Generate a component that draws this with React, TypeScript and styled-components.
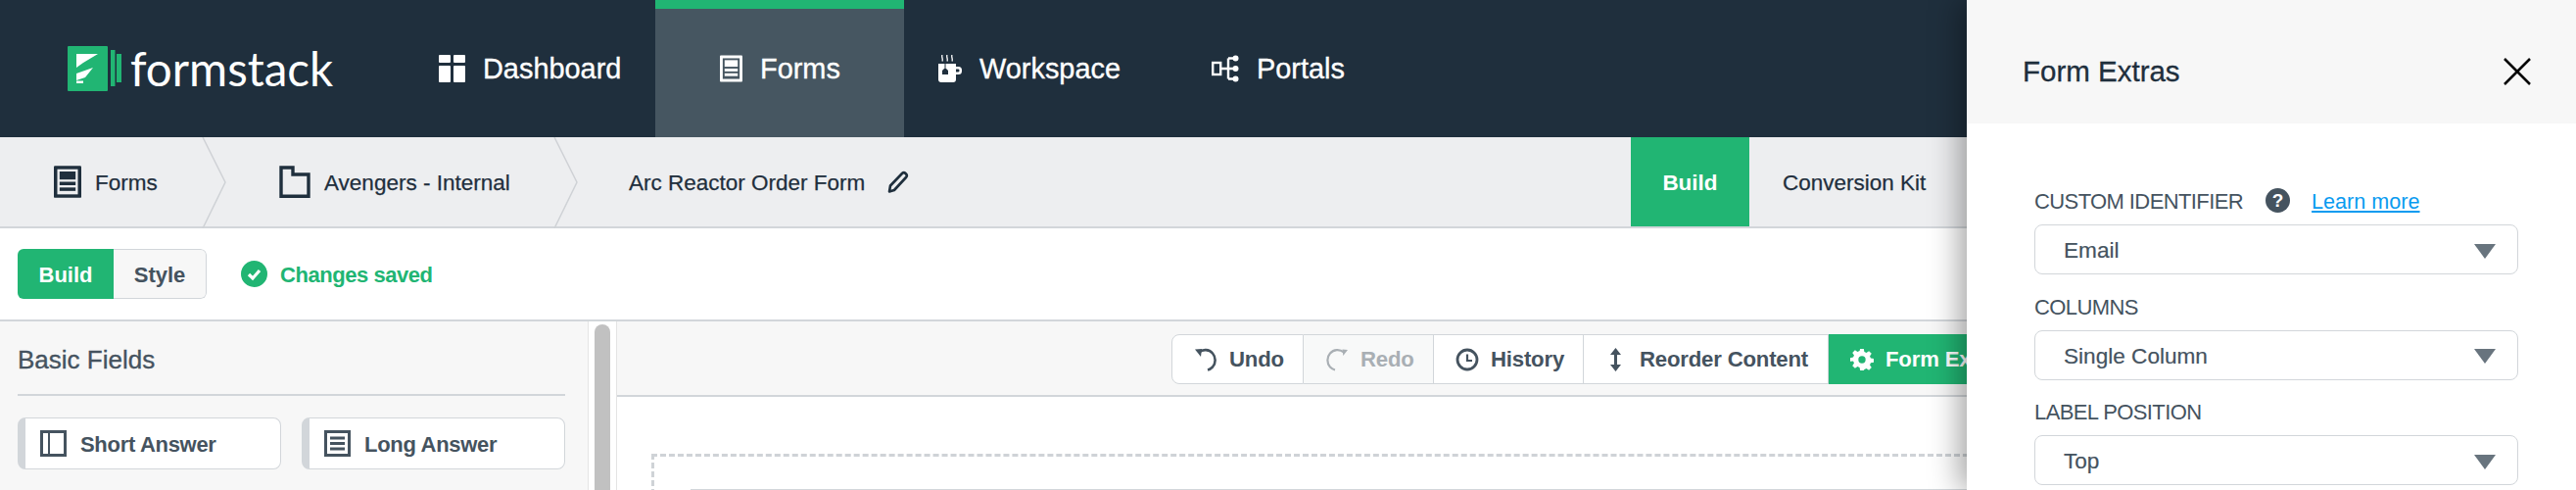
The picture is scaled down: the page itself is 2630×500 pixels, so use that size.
import React from 'react';
import styled, { createGlobalStyle } from 'styled-components';

const GlobalStyle = createGlobalStyle`
  html, body {
    margin: 0;
    padding: 0;
    background: #fff;
  }
  * {
    box-sizing: border-box;
  }
  body {
    font-family: "Liberation Sans", Arial, sans-serif;
  }
`;

const green = '#21b573';
const navy = '#1f2f3d';
const slate = '#45535f';
const line = '#d2d6da';

const Page = styled.div`
  position: relative;
  width: 2630px;
  height: 500px;
  overflow: hidden;
`;

const TopNav = styled.div`
  display: flex;
  height: 140px;
  background: ${navy};
  color: #fff;
`;

const Logo = styled.div`
  display: flex;
  align-items: center;
  width: 448px;
  padding-left: 69px;
  svg {
    flex: none;
  }
`;

const LogoWord = styled.span`
  font-family: Lato, sans-serif;
  font-size: 47.5px;
  font-weight: 400;
  margin-left: 9px;
  margin-top: -2px;
`;

const NavItem = styled.div<{ $active?: boolean; $width: number; $pad: number }>`
  display: flex;
  align-items: center;
  gap: 18px;
  width: ${(p) => p.$width}px;
  padding-left: ${(p) => p.$pad}px;
  padding-bottom: ${(p) => (p.$active ? 9 : 0)}px;
  font-size: 28.9px;
  -webkit-text-stroke: 0.35px #fff;
  background: ${(p) => (p.$active ? '#465661' : 'transparent')};
  border-top: ${(p) => (p.$active ? `9px solid ${green}` : '0')};
`;

const Crumbs = styled.div`
  display: flex;
  height: 93px;
  background: #edeef0;
  border-bottom: 2px solid ${line};
  color: ${navy};
  font-size: 22.5px;
  -webkit-text-stroke: 0.25px ${navy};
`;

const Crumb = styled.div<{ $width: number; $pad: number; $gap?: number }>`
  position: relative;
  display: flex;
  align-items: center;
  gap: ${(p) => p.$gap ?? 14}px;
  width: ${(p) => p.$width}px;
  padding-left: ${(p) => p.$pad}px;
`;

const CrumbText = styled.span`
  padding-top: 2px;
`;

const Chevron = styled.svg`
  position: absolute;
  top: 0;
  right: -26px;
`;

const Tab = styled.div<{ $on?: boolean }>`
  display: flex;
  align-items: center;
  justify-content: center;
  height: 91px;
  padding: 2px ${(p) => (p.$on ? 0 : 34)}px 0;
  width: ${(p) => (p.$on ? '121px' : 'auto')};
  background: ${(p) => (p.$on ? green : 'transparent')};
  color: ${(p) => (p.$on ? '#fff' : navy)};
  font-weight: ${(p) => (p.$on ? 700 : 400)};
  font-size: 22.5px;
  -webkit-text-stroke: ${(p) => (p.$on ? '0' : '0.25px')};
`;

const SaveBar = styled.div`
  display: flex;
  align-items: center;
  height: 95px;
  padding-left: 18px;
  border-bottom: 2px solid ${line};
`;

const Toggle = styled.div`
  display: flex;
  width: 193px;
  height: 51px;
  border-radius: 6px;
  overflow: hidden;
  font-size: 22px;
  font-weight: 700;
`;

const ToggleSide = styled.div<{ $on?: boolean }>`
  display: flex;
  align-items: center;
  justify-content: center;
  width: ${(p) => (p.$on ? 98 : 95)}px;
  padding-top: 2px;
  background: ${(p) => (p.$on ? green : '#f7f7f7')};
  color: ${(p) => (p.$on ? '#fff' : slate)};
  border: ${(p) => (p.$on ? '0' : `1px solid ${line}`)};
  border-left: 0;
  border-radius: ${(p) => (p.$on ? '0' : '0 6px 6px 0')};
`;

const Saved = styled.div`
  display: flex;
  align-items: center;
  gap: 13px;
  margin-left: 35px;
  color: ${green};
  font-size: 22px;
  font-weight: 700;
  letter-spacing: -0.45px;
`;

const SavedText = styled.span`
  padding-top: 2px;
`;

const Workspace = styled.div`
  display: flex;
  height: 172px;
`;

const Sidebar = styled.div`
  width: 601px;
  padding: 0 23px 0 18px;
  background: #f7f7f7;
  border-right: 1px solid #e4e4e4;
`;

const SideTitle = styled.div`
  height: 76px;
  padding-top: 24px;
  font-size: 26px;
  line-height: 30px;
  color: ${slate};
  -webkit-text-stroke: 0.35px ${slate};
  border-bottom: 2px solid ${line};
`;

const FieldRow = styled.div`
  display: flex;
  justify-content: space-between;
  margin-top: 22px;
`;

const FieldButton = styled.div`
  display: flex;
  align-items: center;
  gap: 14px;
  width: 269px;
  height: 53px;
  padding-left: 15px;
  background: #fff;
  border: 1px solid ${line};
  border-left: 8px solid ${line};
  border-radius: 8px;
  color: ${slate};
  font-size: 22px;
  font-weight: 700;
  letter-spacing: -0.3px;
`;

const FieldText = styled.span`
  padding-top: 2px;
`;

const ScrollGutter = styled.div`
  width: 29px;
  padding: 3px 6px 0;
  border-right: 1px solid #e4e4e4;
`;

const ScrollThumb = styled.div`
  height: 200px;
  background: #c1c1c1;
  border-radius: 8px;
`;

const Canvas = styled.div`
  flex: 1;
  min-width: 0;
`;

const Toolbar = styled.div`
  display: flex;
  height: 77px;
  padding: 13px 0 0 566px;
  background: #f7f7f7;
  border-bottom: 2px solid ${line};
`;

const ToolButton = styled.div<{ $w: number; $first?: boolean; $off?: boolean; $on?: boolean; $gap?: number; $pad?: number }>`
  display: flex;
  align-items: center;
  gap: ${(p) => p.$gap ?? 12}px;
  flex: none;
  width: ${(p) => p.$w}px;
  height: 51px;
  padding-left: ${(p) => p.$pad ?? 22}px;
  background: ${(p) => (p.$on ? green : p.$off ? '#f8f9f9' : '#fff')};
  color: ${(p) => (p.$on ? '#fff' : p.$off ? '#a9afb4' : slate)};
  border: ${(p) => (p.$on ? '0' : `1px solid ${line}`)};
  border-left: ${(p) => (p.$first ? `1px solid ${line}` : '0')};
  border-radius: ${(p) => (p.$first ? '8px 0 0 8px' : '0')};
  font-size: 22.2px;
  font-weight: 700;
  letter-spacing: -0.2px;
  white-space: nowrap;
`;

const DropZone = styled.div`
  margin: 58px 0 0 35px;
  height: 60px;
  border-top: 3px dashed #cfd3d7;
  border-left: 3px dashed #cfd3d7;
  padding: 33px 0 0 37px;
`;

const ZoneLine = styled.div`
  border-top: 2px solid ${line};
`;

const Drawer = styled.div`
  position: absolute;
  top: 0;
  right: 0;
  bottom: 0;
  width: 622px;
  background: #fff;
  box-shadow: -8px 0 28px rgba(0, 0, 0, 0.35);
`;

const DrawerHead = styled.div`
  display: flex;
  align-items: center;
  justify-content: space-between;
  height: 126px;
  padding: 20px 46px 0 57px;
  background: #f7f7f7;
  color: ${navy};
  font-size: 29.5px;
  -webkit-text-stroke: 0.3px ${navy};
`;

const DrawerBody = styled.div`
  padding: 65px 59px 0 69px;
`;

const FieldLabel = styled.div`
  display: flex;
  align-items: center;
  height: 30px;
  color: ${slate};
  font-size: 22px;
  letter-spacing: -0.6px;
`;

const Help = styled.span`
  display: inline-flex;
  align-items: center;
  justify-content: center;
  width: 25px;
  height: 25px;
  margin: -3px 22px 0 23px;
  border-radius: 50%;
  background: ${slate};
  color: #fff;
  font-size: 19px;
  font-weight: 700;
  letter-spacing: 0;
`;

const LearnMore = styled.a`
  color: #0a9bf0;
  font-size: 21.6px;
  letter-spacing: 0;
  text-decoration: underline;
`;

const Select = styled.div`
  display: flex;
  align-items: center;
  justify-content: space-between;
  height: 51px;
  margin: 8px 0 18.5px;
  padding: 3px 22px 0 29px;
  border: 1px solid ${line};
  border-radius: 8px;
  color: ${slate};
  font-size: 22.6px;
  -webkit-text-stroke: 0.2px ${slate};
`;

const Caret = styled.span`
  width: 0;
  height: 0;
  border-left: 11px solid transparent;
  border-right: 11px solid transparent;
  border-top: 15px solid #68747e;
`;

const NavIconDashboard = () => (
  <svg width="27" height="28" viewBox="0 0 27 28" fill="#fff">
    <rect x="0" y="0" width="12" height="8" rx="1" />
    <rect x="15" y="0" width="12" height="8" rx="1" />
    <rect x="0" y="11" width="12" height="17" rx="1" />
    <rect x="15" y="11" width="12" height="17" rx="1" />
  </svg>
);

const FormIcon = ({ w, h, color, hole }: { w: number; h: number; color: string; hole: string }) => (
  <svg width={w} height={h} viewBox="0 0 24 28">
    <rect width="24" height="28" rx="1" fill={color} />
    <rect x="3" y="3" width="18" height="22" fill={hole} />
    <rect x="5" y="5" width="14" height="7" fill={color} />
    <rect x="5" y="14" width="14" height="3" fill={color} />
    <rect x="5" y="19" width="14" height="3" fill={color} />
  </svg>
);

const MugIcon = () => (
  <svg width="24" height="28" viewBox="0 0 24 28" fill="#fff">
    <path d="M4 0c-1 2 1 4 0 6.500M9 0c-1 2 1 4 0 6.500M14 0c-1 2 1 4 0 6.500" stroke="#fff" strokeWidth="1.300" fill="none" />
    <path d="M0 9h18v16a3 3 0 0 1-3 3H3a3 3 0 0 1-3-3z" />
    <path d="M18 12h2.500a3.500 3.500 0 0 1 3.500 3.500v1a3.500 3.500 0 0 1-3.500 3.500H18v-2.500h2.200a1.300 1.300 0 0 0 1.300-1.300v-.400a1.300 1.300 0 0 0-1.300-1.300H18z" />
    <path d="M7 9v4" stroke={navy} strokeWidth="1" />
    <path d="M7 13l3 3v4H4v-4z" fill={navy} />
  </svg>
);

const PortalIcon = () => (
  <svg width="28" height="28" viewBox="0 0 28 28" fill="none" stroke="#fff" strokeWidth="2.400">
    <rect x="1.200" y="8" width="8" height="12" />
    <path d="M9 14h15M17 3.500v21M17 3.500h7M17 24.500h7" />
    <circle cx="24.500" cy="3.500" r="3" fill="#fff" stroke="none" />
    <circle cx="24.500" cy="14" r="3" fill="#fff" stroke="none" />
    <circle cx="24.500" cy="24.500" r="3" fill="#fff" stroke="none" />
  </svg>
);

const CrumbChevron = () => (
  <Chevron width="26" height="93" viewBox="0 0 26 93" fill="none" stroke="#cfd2d6" strokeWidth="1.500">
    <path d="M1 0l23 46L1 93" />
  </Chevron>
);

const App: React.FC = () => (
  <Page>
    <GlobalStyle />
    <TopNav>
      <Logo>
        <svg width="55" height="46" viewBox="0 0 55 46">
          <rect width="41" height="46" rx="1" fill={green} />
          <rect x="44" y="4" width="4.500" height="37" fill={green} />
          <rect x="50" y="8" width="5" height="29" fill={green} />
          <path d="M9 8h22l-15 9-7 5zM9 28l17-6-8 10-9 3zM9 35.500h7V38H9z" fill="#fff" />
        </svg>
        <LogoWord>formstack</LogoWord>
      </Logo>
      <NavItem $width={221} $pad={0}>
        <NavIconDashboard />
        Dashboard
      </NavItem>
      <NavItem $active $width={254} $pad={66}>
        <FormIcon w={23} h={28} color="#fff" hole="#465661" />
        Forms
      </NavItem>
      <NavItem $width={314} $pad={35}>
        <MugIcon />
        Workspace
      </NavItem>
      <NavItem $width={200} $pad={0}>
        <PortalIcon />
        Portals
      </NavItem>
    </TopNav>
    <Crumbs>
      <Crumb $width={206} $pad={55}>
        <FormIcon w={28} h={33} color={navy} hole="#edeef0" />
        <CrumbText>Forms</CrumbText>
        <CrumbChevron />
      </Crumb>
      <Crumb $width={359} $pad={79}>
        <svg width="32" height="33" viewBox="0 0 32 33" fill="none" stroke={navy} strokeWidth="3.400">
          <path d="M2 31.300V2h12v7h16v22.300z" />
        </svg>
        <CrumbText>Avengers - Internal</CrumbText>
        <CrumbChevron />
      </Crumb>
      <Crumb $width={1100} $pad={77} $gap={23}>
        <CrumbText>Arc Reactor Order Form</CrumbText>
        <svg width="22" height="23" viewBox="0 0 22 23" fill="none" stroke={navy} strokeWidth="2.600">
          <path d="M2 21.500l1-6L15 3a2.500 2.500 0 0 1 3.500 0l.5.500a2.500 2.500 0 0 1 0 3.500L7 20z" strokeLinejoin="round" />
        </svg>
      </Crumb>
      <Tab $on>Build</Tab>
      <Tab>Conversion Kit</Tab>
    </Crumbs>
    <SaveBar>
      <Toggle>
        <ToggleSide $on>Build</ToggleSide>
        <ToggleSide>Style</ToggleSide>
      </Toggle>
      <Saved>
        <svg width="27" height="27" viewBox="0 0 27 27">
          <circle cx="13.500" cy="13.500" r="13.500" fill={green} />
          <path d="M8 14l4 4 7-8" fill="none" stroke="#fff" strokeWidth="3.200" />
        </svg>
        <SavedText>Changes saved</SavedText>
      </Saved>
    </SaveBar>
    <Workspace>
      <Sidebar>
        <SideTitle>Basic Fields</SideTitle>
        <FieldRow>
          <FieldButton>
            <svg width="27" height="27" viewBox="0 0 27 27" fill="none" stroke={slate}>
              <rect x="1.500" y="1.500" width="24" height="24" strokeWidth="3" />
              <path d="M9 3v21" strokeWidth="2" />
            </svg>
            <FieldText>Short Answer</FieldText>
          </FieldButton>
          <FieldButton>
            <svg width="27" height="27" viewBox="0 0 27 27" fill="none" stroke={slate}>
              <rect x="1.500" y="1.500" width="24" height="24" strokeWidth="3" />
              <path d="M6 8h15M6 13.500h15M6 19h15" strokeWidth="3" />
            </svg>
            <FieldText>Long Answer</FieldText>
          </FieldButton>
        </FieldRow>
      </Sidebar>
      <ScrollGutter>
        <ScrollThumb />
      </ScrollGutter>
      <Canvas>
        <Toolbar>
          <ToolButton $first $w={135}>
            <svg width="24" height="24" viewBox="0 0 24 24" fill="none" stroke={slate} strokeWidth="2.600">
              <path d="M5 4.500a10 10 0 0 1 14 1c3.500 4 3.500 10 0 14-1.500 1.500-3 2.500-5 3" />
              <path d="M1 1.500l7-.5-1 8z" fill={slate} stroke="none" />
            </svg>
            Undo
          </ToolButton>
          <ToolButton $off $w={133}>
            <svg width="24" height="24" viewBox="0 0 24 24" fill="none" stroke="#a9afb4" strokeWidth="2.200">
              <path d="M19 4.500a10 10 0 0 0-14 1c-3.500 4-3.500 10 0 14 1.500 1.500 3 2.500 5 3" />
              <path d="M23 2l-5.500-.5.800 6.500z" fill="#a9afb4" stroke="none" />
            </svg>
            Redo
          </ToolButton>
          <ToolButton $w={153}>
            <svg width="24" height="24" viewBox="0 0 24 24" fill="none" stroke={slate} strokeWidth="2.800">
              <circle cx="12" cy="12" r="10" />
              <path d="M12 6.500V13h5" strokeWidth="2.200" />
            </svg>
            History
          </ToolButton>
          <ToolButton $w={250} $pad={27} $gap={19}>
            <svg width="11" height="24" viewBox="0 0 11 24" fill={slate}>
              <path d="M5.500 0L11 7H7v10h4l-5.500 7L0 17h4V7H0z" />
            </svg>
            Reorder Content
          </ToolButton>
          <ToolButton $on $w={300}>
            <svg width="24" height="24" viewBox="-1 0 26 24" fill="#fff">
              <path d="M10 0h4l.6 3.300 2.300 1 2.800-1.900 2.900 2.900-1.900 2.800 1 2.300 3.300.6v4l-3.300.6-1 2.300 1.900 2.800-2.900 2.900-2.800-1.900-2.300 1L14 24h-4l-.6-3.300-2.300-1-2.800 1.900-2.900-2.900 1.900-2.800-1-2.300L-1 14v-4l3.300-.6 1-2.300-1.900-2.800 2.900-2.900 2.800 1.900 2.300-1zM12 8a4 4 0 1 0 0 8 4 4 0 0 0 0-8z" fillRule="evenodd" />
            </svg>
            Form Extras
          </ToolButton>
        </Toolbar>
        <DropZone>
          <ZoneLine />
        </DropZone>
      </Canvas>
    </Workspace>
    <Drawer>
      <DrawerHead>
        Form Extras
        <svg width="28" height="28" viewBox="0 0 28 28" stroke="#000" strokeWidth="2.500">
          <path d="M1 1l26 26M27 1L1 27" />
        </svg>
      </DrawerHead>
      <DrawerBody>
        <FieldLabel>
          CUSTOM IDENTIFIER
          <Help>?</Help>
          <LearnMore>Learn more</LearnMore>
        </FieldLabel>
        <Select>
          Email
          <Caret />
        </Select>
        <FieldLabel>COLUMNS</FieldLabel>
        <Select>
          Single Column
          <Caret />
        </Select>
        <FieldLabel>LABEL POSITION</FieldLabel>
        <Select>
          Top
          <Caret />
        </Select>
      </DrawerBody>
    </Drawer>
  </Page>
);

export default App;
